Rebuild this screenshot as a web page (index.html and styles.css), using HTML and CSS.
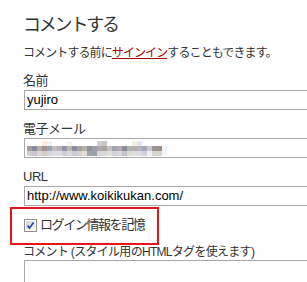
FILE: index.html
```html
<!DOCTYPE html>
<html lang="ja">
<head>
<meta charset="utf-8">
<link rel="stylesheet" href="styles.css">
</head>
<body>
<div class="page">
  <h2 class="title">コメントする</h2>
  <p class="intro">コメントする前に<a class="link" href="#">サインイン</a>することもできます。</p>
  <label class="lbl">名前</label>
  <div class="field">yujiro</div>
  <label class="lbl">電子メール</label>
  <div class="field"><div class="mosaic"></div></div>
  <label class="lbl">URL</label>
  <div class="field">http://www.koikikukan.com/</div>
  <div class="remember">
    <svg class="check" width="13" height="13" viewBox="0 0 13 13">
      <defs>
        <linearGradient id="cg" x1="0" y1="0" x2="1" y2="1">
          <stop offset="0" stop-color="#d4d4d4"/>
          <stop offset="1" stop-color="#f8f8f8"/>
        </linearGradient>
      </defs>
      <rect x="0.5" y="0.5" width="12" height="12" fill="#fff" stroke="#8e8f8f"/>
      <rect x="2" y="2" width="9" height="9" fill="url(#cg)"/>
      <path d="M3.5 6.5 L5.5 9 L9.5 3.5" stroke="#2a4a9e" stroke-width="1.7" fill="none"/>
    </svg>
    <span class="rtext">ログイン情報を記憶</span>
  </div>
  <label class="lbl lbl-comment">コメント (スタイル用のHTMLタグを使えます)</label>
  <div class="area"></div>
</div>
</body>
</html>
```
FILE: styles.css
```css
html, body {
  margin: 0;
  padding: 0;
  background: #fff;
}
.page {
  padding: 12px 0 0 23px;
  font-family: "Liberation Sans", "Noto Sans CJK JP", sans-serif;
  color: #333;
  overflow: hidden;
  height: 270px;
}
.title {
  margin: 0;
  font-size: 18px;
  font-weight: normal;
  line-height: 26px;
  letter-spacing: -2.2px;
  height: 26px;
}
.intro {
  margin: 6px 0 0 0;
  font-size: 12px;
  line-height: 18px;
  letter-spacing: -0.9px;
  height: 18px;
}
.link {
  color: #a80000;
  text-decoration: underline;
}
.lbl {
  display: block;
  font-size: 13px;
  line-height: 18px;
  height: 18px;
  margin-top: 10px;
  letter-spacing: -0.5px;
}
.field {
  margin-left: 1px;
  box-sizing: border-box;
  width: 300px;
  height: 20px;
  border: 1px solid #a8a8a8;
  padding: 0 2px;
  font-size: 13px;
  line-height: 18px;
  color: #000;
  white-space: nowrap;
}
.mosaic {
  margin-top: 2px;
  width: 140px;
  height: 15px;
  background-repeat: no-repeat;
  background-size: 140px 5px;
  background-position: 0 0, 0 5px, 0 10px;
  background-image:
    linear-gradient(to right, #fff 0 15px, #f8ece0 15px 20px, #eef2f8 20px 25px, #fff 25px 40px, #f4f4f0 40px 45px, #fff 45px 70px, #d0d0d4 70px 75px, #c8c8cc 75px 80px, #fff 80px 105px, #f4f0e0 105px 110px, #e4e4f4 110px 115px, #fff 115px 140px),
    linear-gradient(to right, #a49c98 0 5px, #8c8aa0 5px 10px, #b4aca8 10px 15px, #a09490 15px 20px, #9ca4ac 20px 25px, #c0bcc4 25px 30px, #b8b0b8 30px 35px, #9890a8 35px 40px, #b8b8b0 40px 45px, #8c8c9c 45px 50px, #a8a0a0 50px 55px, #b8b0a8 55px 60px, #8c9098 60px 65px, #9ca0a8 65px 70px, #b0a8b0 70px 75px, #a8a4a0 75px 80px, #c4c0c0 80px 85px, #a0a4ac 85px 90px, #b4acb4 90px 95px, #8c8c94 95px 100px, #b0b4b0 100px 105px, #b8b0b0 105px 110px, #b0b4c0 110px 115px, #a8a4b0 115px 120px, #c8c8d0 120px 125px, #9c9494 125px 130px, #a09088 130px 135px, #eef2fa 135px 140px),
    linear-gradient(to right, #d4d0d0 0 5px, #c8c4cc 5px 10px, #dcd8d4 10px 15px, #d4ccc8 15px 20px, #d0d8e0 20px 25px, #e0dce0 25px 30px, #dcdce4 30px 35px, #d0ccd8 35px 40px, #dcdcd4 40px 45px, #c8ccd4 45px 50px, #d8d0d0 50px 55px, #e0dcd8 55px 60px, #a0a4a8 60px 65px, #9ca0a4 65px 70px, #d8d4dc 70px 75px, #dcd8d4 75px 80px, #e4e0e0 80px 85px, #d0d4dc 85px 90px, #dcd8dc 90px 95px, #c0c4c8 95px 100px, #d8dcd8 100px 105px, #e0dcdc 105px 110px, #d8dce4 110px 115px, #d4d0dc 115px 120px, #eceef4 120px 125px, #d8d4d4 125px 130px, #dcd4cc 130px 135px, #f4f8fc 135px 140px);
}
.remember {
  margin: 1px 0 0 -13px;
  box-sizing: border-box;
  width: 149px;
  height: 38px;
  border: 2px solid #e8141c;
  padding: 10px 0 0 12px;
  display: flex;
  align-items: flex-start;
  gap: 3px;
}
.check {
  display: block;
  flex: none;
}
.rtext {
  font-size: 13px;
  line-height: 14px;
  letter-spacing: -1.4px;
  margin-top: -1px;
}
.lbl-comment {
  margin-top: 0;
  font-size: 12px;
  line-height: 15px;
  height: 15px;
  letter-spacing: -0.7px;
}
.area {
  margin-left: 1px;
  margin-top: 0;
  box-sizing: border-box;
  width: 300px;
  height: 60px;
  border: 1px solid #a8a8a8;
}
```
